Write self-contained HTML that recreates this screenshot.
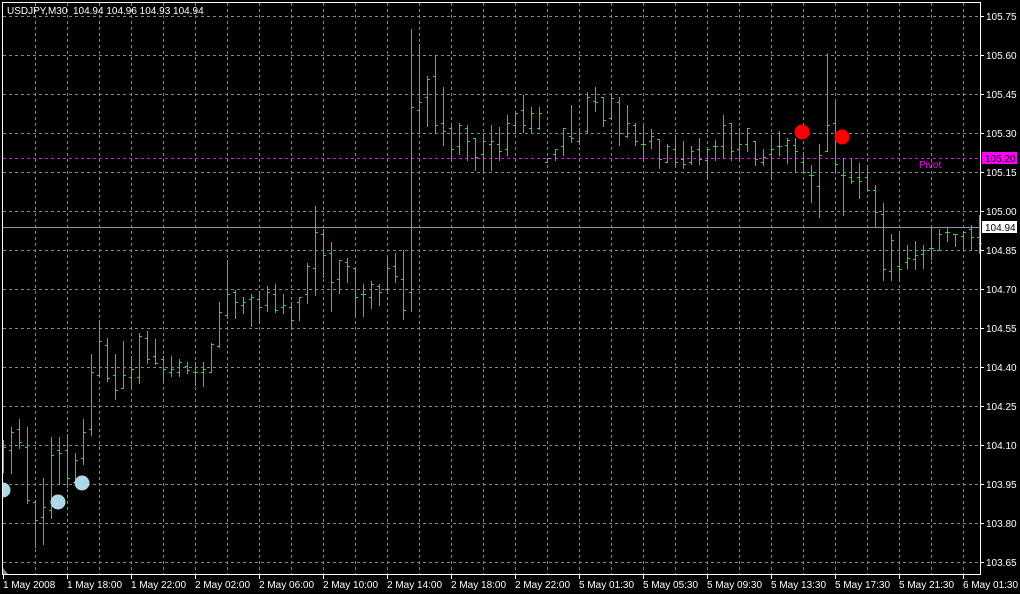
<!DOCTYPE html>
<html><head><meta charset="utf-8"><style>
html,body{margin:0;padding:0;background:#000;width:1020px;height:594px;overflow:hidden}
svg{display:block}
text{font-family:"Liberation Sans",sans-serif;font-size:10px;fill:#fff;white-space:pre}
</style></head><body>
<svg id="c" width="1020" height="594" xmlns="http://www.w3.org/2000/svg">
<rect width="1020" height="594" fill="#000"/>
<g id="grid" stroke="#778899" stroke-width="1" stroke-dasharray="3,3"></g>
<line x1="3" y1="158.5" x2="980" y2="158.5" stroke="#ff00ff" stroke-dasharray="3,3"/>
<line x1="3" y1="227.5" x2="980" y2="227.5" stroke="#8a96a6"/>
<text x="919" y="168" style="fill:#ff00ff;font-size:10px">Pivot</text>
<g id="bars" stroke="#20e020" stroke-width="1" fill="none"></g>
<circle cx="3" cy="490" r="7.5" fill="#add8e6"/>
<circle cx="58" cy="502" r="7.5" fill="#add8e6"/>
<circle cx="82" cy="483" r="7.5" fill="#add8e6"/>
<circle cx="802" cy="132" r="7.5" fill="#ff0000"/>
<circle cx="842" cy="137" r="7.5" fill="#ff0000"/>
<rect x="0" y="0" width="3" height="594" fill="#000"/>
<line x1="2.5" y1="2" x2="2.5" y2="575" stroke="#fff"/>
<line x1="2" y1="2.5" x2="981" y2="2.5" stroke="#fff"/>
<line x1="980.5" y1="2" x2="980.5" y2="575" stroke="#fff"/>
<line x1="2" y1="574.5" x2="981" y2="574.5" stroke="#fff"/>
<polygon points="3,568 3,574 8,574" fill="#778899"/>
<g id="axis"></g>
<rect x="982" y="152" width="35" height="12" fill="#ff00ff"/>
<text x="985" y="162" style="fill:#000">105.20</text>
<rect x="982" y="221" width="35" height="12" fill="#fff"/>
<text x="985" y="231" style="fill:#000">104.94</text>
<text x="7" y="14" xml:space="preserve">USDJPY,M30  104.94 104.96 104.93 104.94</text>
</svg>
<script>
var ns="http://www.w3.org/2000/svg";
function el(p,n,a,t){var e=document.createElementNS(ns,n);for(var k in a)e.setAttribute(k,a[k]);if(t)e.textContent=t;p.appendChild(e);return e;}
var g=document.getElementById('grid');
for(var x=35;x<980;x+=32)el(g,'line',{x1:x+.5,y1:3,x2:x+.5,y2:574});
for(var y=16;y<=562;y+=39)el(g,'line',{x1:3,y1:y+.5,x2:980,y2:y+.5});
var ax=document.getElementById('axis');
var p=105.75;
for(var i=0;i<15;i++){var yy=16+39*i;el(ax,'line',{x1:980,y1:yy+.5,x2:984,y2:yy+.5,stroke:'#fff'});
el(ax,'text',{x:986,y:yy+4},(p-0.15*i).toFixed(2));}
var L=["1 May 2008","1 May 18:00","1 May 22:00","2 May 02:00","2 May 06:00","2 May 10:00","2 May 14:00","2 May 18:00","2 May 22:00","5 May 01:30","5 May 05:30","5 May 09:30","5 May 13:30","5 May 17:30","5 May 21:30","6 May 01:30"];
for(var i=0;i<L.length;i++){var xx=3+64*i;el(ax,'line',{x1:xx+.5,y1:574,x2:xx+.5,y2:579,stroke:'#fff'});el(ax,'text',{x:xx,y:588},L[i]);}
var D=[[440,472,448,447],[427,473,450,432],[419,448,429,442],[427,503,447,500],[500,547,502,520],[478,544,517,507],[437,518,510,455],[437,484,450,453],[434,487,450,478],[453,484,482,460],[419,464,458,432],[354,435,429,372],[320,375,375,341],[338,381,345,378],[354,399,375,390],[341,388,388,375],[356,388,377,369],[333,383,377,336],[331,363,338,359],[339,364,356,363],[356,382,359,369],[356,376,372,369],[359,376,372,362],[362,373,366,370],[362,385,372,372],[362,386,372,369],[343,372,372,344],[302,347,346,312],[260,318,315,294],
[290,318,292,302],[297,313,305,302],[294,326,299,297],[291,323,299,307],[286,311,305,292],[284,312,294,310],[294,313,307,305],[302,329,307,320],[297,320,302,297],[263,303,294,266],[206,295,268,232],[229,277,234,255],[242,311,253,282],[260,293,279,260],[258,282,262,266],[267,316,268,297],[284,316,294,294],[281,308,297,284],[284,305,286,292],[258,293,289,268],[253,282,266,276],[250,319,279,310],
[29,311,292,107],[44,133,110,102],[76,126,97,79],[55,133,76,125],[87,145,123,131],[123,161,128,149],[123,154,146,125],[125,160,128,141],[138,170,138,157],[134,170,154,141],[125,170,144,141],[127,160,144,151],[115,155,149,123],[113,132,125,113],[95,132,110,125],[107,132,128,113],[107,129,128,113],
[158,162,162,158],[149,160,154,149],[128,155,146,128],[105,142,136,138],[128,144,141,133],[92,132,131,97],[87,111,101,102],[97,126,97,120],[94,119,118,98],[97,145,102,133],[105,137,136,123],[123,145,125,141],[125,160,144,144],[129,148,141,136],[139,168,139,159],[144,162,162,146],[138,166,149,162],[141,168,159,164],[146,164,162,151],[138,164,149,159],[149,177,160,149],[140,160,146,146],[115,158,146,125],[123,160,123,151],[128,160,149,144],[128,151,144,128],[141,165,141,159],
[149,165,162,157],[138,178,154,149],[131,155,146,146],[138,163,145,140],[138,171,145,151],[152,172,162,172],[165,202,175,175],[144,217,186,155],[53,151,151,125],[102,172,123,164],[158,215,175,175],[158,183,177,181],[163,198,177,181],[165,190,177,190],[185,227,190,212],[203,280,214,269],[234,280,271,240],[234,280,266,269],[245,268,262,258],[241,269,259,255],[245,268,254,250],[228,259,248,248],[229,250,250,234],[228,241,232,232],[234,246,234,234],[232,249,236,232],[225,250,229,237],[215,253,237,243]];
var b=document.getElementById('bars'),d='';
for(var i=0;i<D.length;i++){var x=3+8*i+.5,r=D[i];
d+='M'+x+' '+r[0]+'V'+(r[1]+1)+'M'+(x-2.5)+' '+(r[2]+.5)+'H'+x+'M'+x+' '+(r[3]+.5)+'H'+(x+2.5);}
el(b,'path',{d:d});
</script>
</body></html>
